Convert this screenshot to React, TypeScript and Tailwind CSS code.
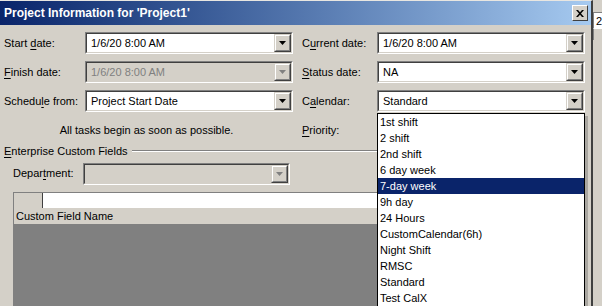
import React from "react";

const calendars = [
  "1st shift",
  "2 shift",
  "2nd shift",
  "6 day week",
  "7-day week",
  "9h day",
  "24 Hours",
  "CustomCalendar(6h)",
  "Night Shift",
  "RMSC",
  "Standard",
  "Test CalX",
];

function Arrow({ disabled }: { disabled?: boolean }) {
  return (
    <svg width="7" height="4" viewBox="0 0 7 4">
      <path d="M0 0h7L3.5 4z" fill={disabled ? "#808080" : "#000"} />
    </svg>
  );
}

function Combo({
  value,
  width,
  disabled,
}: {
  value: string;
  width: string;
  disabled?: boolean;
}) {
  return (
    <div
      className={`${width} h-[22px] border border-t-[#808080] border-l-[#808080] border-b-white border-r-white`}
    >
      <div
        className={`flex h-full border border-t-[#404040] border-l-[#404040] border-b-[#d4d0c8] border-r-[#d4d0c8] ${
          disabled ? "bg-[#d4d0c8]" : "bg-white"
        }`}
      >
        <span
          className={`flex-1 pl-[4px] leading-[18px] ${
            disabled ? "text-[#808080]" : "text-black"
          }`}
        >
          {value}
        </span>
        <div className="w-[17px] h-full border border-t-[#d4d0c8] border-l-[#d4d0c8] border-b-[#404040] border-r-[#404040] bg-[#d4d0c8]">
          <div className="flex h-full items-center justify-center border border-t-white border-l-white border-b-[#808080] border-r-[#808080]">
            <Arrow disabled={disabled} />
          </div>
        </div>
      </div>
    </div>
  );
}

export default function App() {
  return (
    <div className="flex w-[602px] h-[306px] overflow-hidden bg-[#d4d0c8] font-['Liberation_Sans',Arial,sans-serif] text-[11px] text-black">
      {/* dialog */}
      <div className="relative flex flex-col shrink-0 w-[593px] h-full overflow-hidden border-r-2 border-r-[#404040] border-t border-t-[#e8e6e1]">
        {/* title bar */}
        <div className="flex shrink-0 items-center h-[24px] pl-[4px] pr-[3px] bg-linear-to-r from-[#0a246a] to-[#a6caf0]">
          <span className="flex-1 text-[12px] font-bold text-white">
            Project Information for 'Project1'
          </span>
          <div className="w-[16px] h-[16px] border border-t-white border-l-white border-b-[#404040] border-r-[#404040] bg-[#d4d0c8] flex items-center justify-center">
            <svg width="8" height="7" viewBox="0 0 8 7">
              <path d="M0 0h2l2 2.2L6 0h2L5 3.5 8 7H6L4 4.8 2 7H0l3-3.5z" fill="#000" />
            </svg>
          </div>
        </div>

        {/* form */}
        <div className="flex flex-col shrink-0 pt-[7px]">
          <div className="flex items-center h-[22px]">
            <span className="w-[85px] pl-[4px]">
              Start <u className="underline-offset-2">d</u>ate:
            </span>
            <Combo value="1/6/20 8:00 AM" width="w-[208px]" />
            <span className="w-[75px] ml-[9px]">
              C<u className="underline-offset-2">u</u>rrent date:
            </span>
            <Combo value="1/6/20 8:00 AM" width="w-[208px]" />
          </div>

          <div className="flex items-center h-[22px] mt-[7px]">
            <span className="w-[85px] pl-[4px]">
              <u className="underline-offset-2">F</u>inish date:
            </span>
            <Combo value="1/6/20 8:00 AM" width="w-[208px]" disabled />
            <span className="w-[75px] ml-[9px]">
              <u className="underline-offset-2">S</u>tatus date:
            </span>
            <Combo value="NA" width="w-[208px]" />
          </div>

          <div className="flex items-center h-[22px] mt-[7px]">
            <span className="w-[85px] pl-[4px]">
              Schedu<u className="underline-offset-2">l</u>e from:
            </span>
            <Combo value="Project Start Date" width="w-[208px]" />
            <span className="w-[75px] ml-[9px]">
              C<u className="underline-offset-2">a</u>lendar:
            </span>
            <Combo value="Standard" width="w-[208px]" />
          </div>

          <div className="flex items-center h-[16px] mt-[10px]">
            <span className="w-[293px] text-center">
              All tasks begin as soon as possible.
            </span>
            <span className="ml-[9px]">
              <u className="underline-offset-2">P</u>riority:
            </span>
          </div>

          <div className="flex items-center h-[14px] mt-[6px] pl-[4px] pr-[6px]">
            <span>
              <u className="underline-offset-2">E</u>nterprise Custom Fields
            </span>
            <div className="flex-1 ml-[4px] border-t border-t-[#808080] border-b border-b-white" />
          </div>

          <div className="flex items-center h-[21px] mt-[5px] pl-[13px]">
            <span className="w-[70px]">
              Depar<u className="underline-offset-2">t</u>ment:
            </span>
            <Combo value="" width="w-[207px]" disabled />
          </div>

          {/* custom fields grid */}
          <div className="flex flex-col ml-[13px] mt-[8px] w-[572px] border-t border-l border-[#808080]">
            <div className="flex h-[15px]">
              <div className="w-[29px] border-r border-r-[#404040]" />
              <div className="flex-1 bg-white" />
            </div>
            <div className="h-[16px] pl-[2px] leading-[16px]">Custom Field Name</div>
            <div className="h-[90px] bg-[#808080]" />
          </div>
        </div>

        {/* open calendar list */}
        <div className="absolute left-[377px] top-[112px] w-[208px] border border-black bg-white shadow-[3px_3px_0_rgba(0,0,0,0.2)]">
          {calendars.map((c) => (
            <div
              key={c}
              className={`h-[16px] pl-[2px] leading-[16px] ${
                c === "7-day week" ? "bg-[#0a246a] text-white" : ""
              }`}
            >
              {c}
            </div>
          ))}
        </div>
      </div>

      {/* window behind */}
      <div className="flex flex-col flex-1 pt-[12px]">
        <div className="h-[16px] border-l border-t border-[#808080] bg-white pl-[2px] leading-[16px]">
          2
        </div>
        <div className="h-[12px] border-l border-[#808080] border-t border-t-white" />
      </div>
    </div>
  );
}
